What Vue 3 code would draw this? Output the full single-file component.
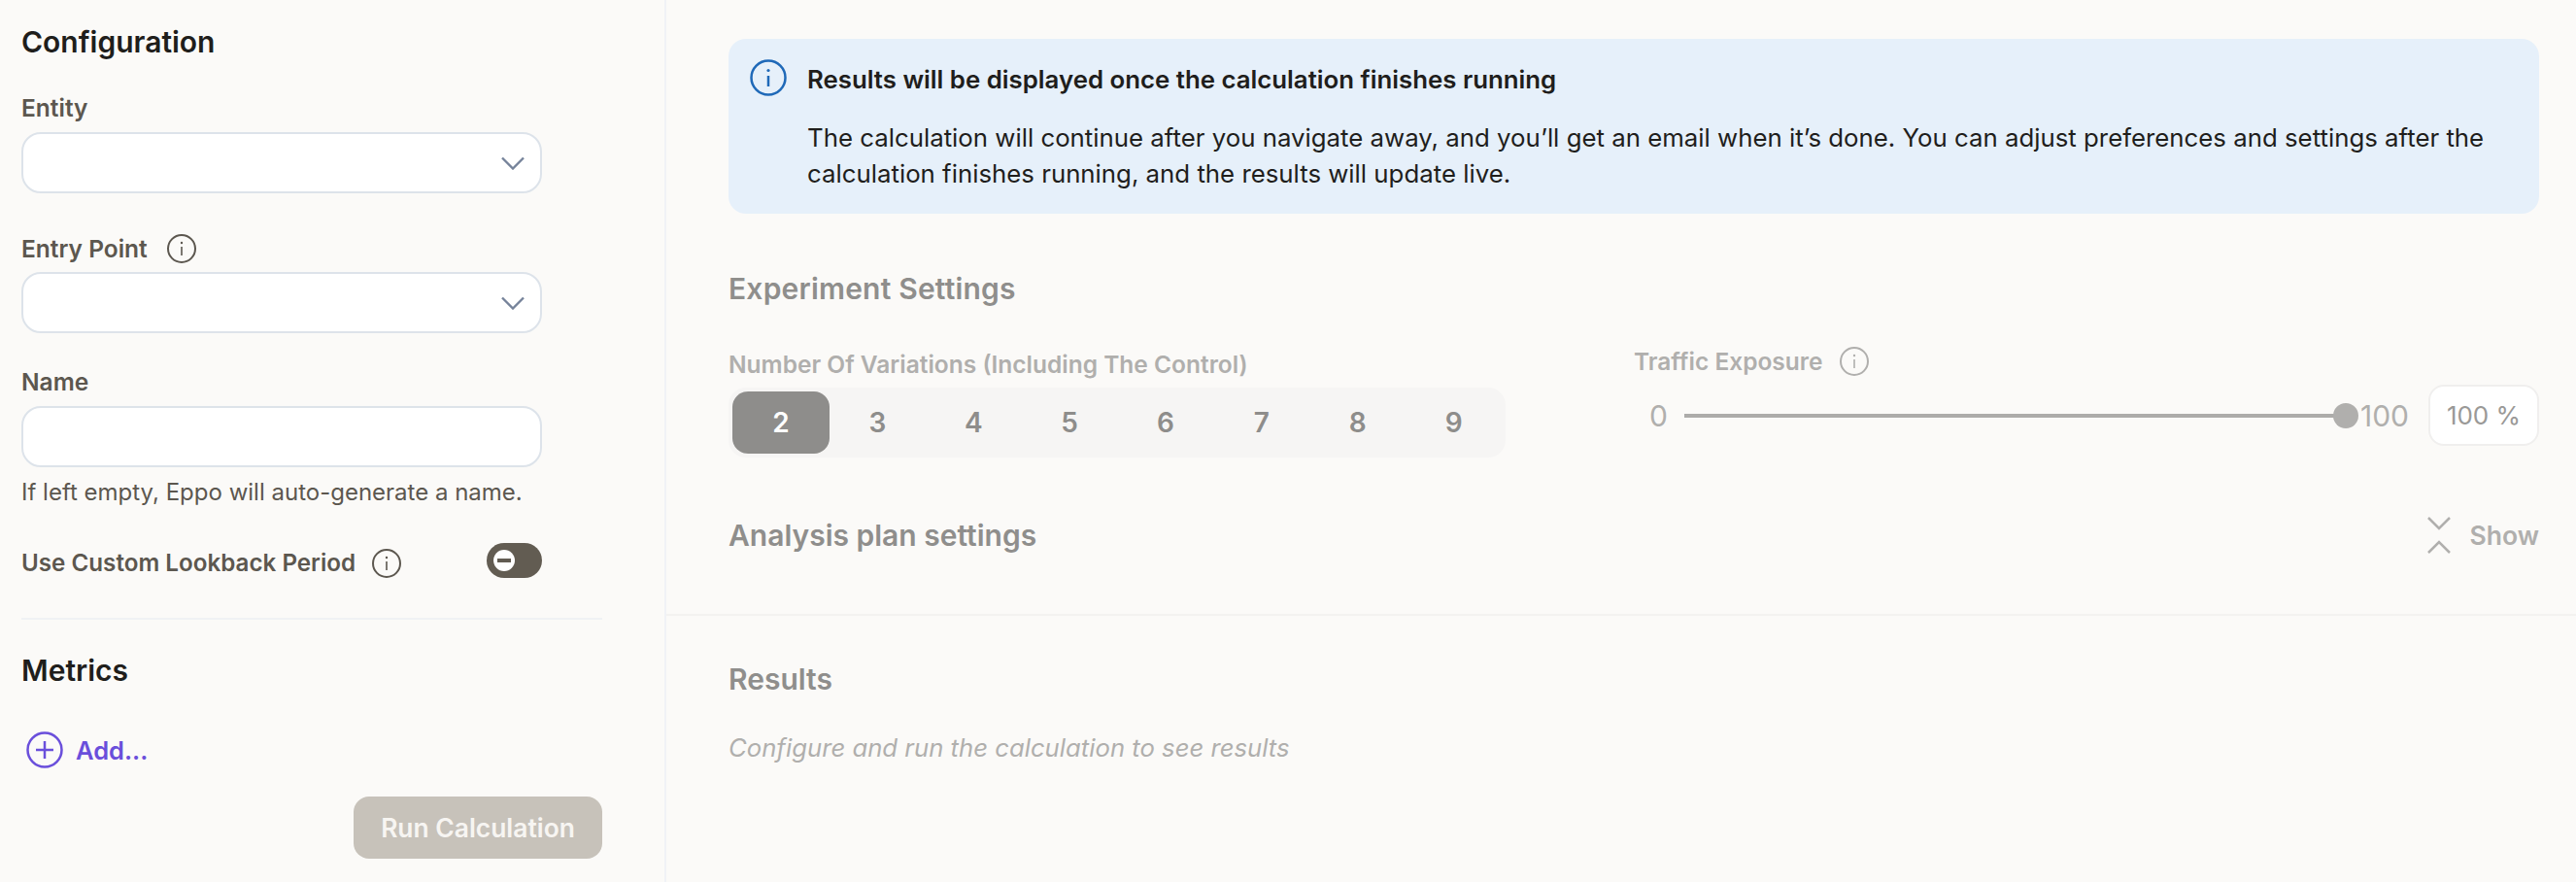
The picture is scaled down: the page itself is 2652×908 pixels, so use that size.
<template>
  <div class="page">
    <aside class="sidebar">
      <h2 class="heading">Configuration</h2>

      <div class="field first">
        <label class="label">Entity</label>
        <div class="select">
          <svg class="chevron" width="24" height="14" viewBox="0 0 24 14"><path d="M1 1.5 12 12.5 23 1.5" /></svg>
        </div>
      </div>

      <div class="field second">
        <label class="label">Entry Point <InfoMark /></label>
        <div class="select">
          <svg class="chevron" width="24" height="14" viewBox="0 0 24 14"><path d="M1 1.5 12 12.5 23 1.5" /></svg>
        </div>
      </div>

      <div class="field third">
        <label class="label">Name</label>
        <div class="select"></div>
        <p class="hint">If left empty, Eppo will auto-generate a name.</p>
      </div>

      <div class="toggle-row">
        <span class="label">Use Custom Lookback Period <InfoMark /></span>
        <span class="toggle"><span class="knob"></span></span>
      </div>

      <div class="rule"></div>

      <h2 class="heading metrics">Metrics</h2>

      <div class="add">
        <svg width="38" height="38" viewBox="0 0 38 38" fill="none" stroke="currentColor" stroke-width="2.5">
          <circle cx="19" cy="19" r="17.5" />
          <path d="M19 10v18M10 19h18" />
        </svg>
        <span>Add...</span>
      </div>

      <button class="run">Run Calculation</button>
    </aside>

    <main class="main">
      <section class="top">
        <div class="banner">
          <svg class="banner-icon" width="38" height="38" viewBox="0 0 38 38" fill="none" stroke="#1f69b8" stroke-width="2.5">
            <circle cx="19" cy="19" r="17.5" />
            <path d="M19 17v11" />
            <circle cx="19" cy="11.5" r="1.6" fill="#1f69b8" stroke="none" />
          </svg>
          <div>
            <div class="banner-title">Results will be displayed once the calculation finishes running</div>
            <p class="banner-body">The calculation will continue after you navigate away, and you’ll get an email when it’s done. You can adjust preferences and settings after the calculation finishes running, and the results will update live.</p>
          </div>
        </div>

        <h2 class="heading muted settings">Experiment Settings</h2>

        <div class="settings-row">
          <div class="variations">
            <div class="label faded">Number Of Variations (Including The Control)</div>
            <div class="segments">
              <span v-for="n in variations" :key="n" class="segment" :class="{ active: n === 2 }">{{ n }}</span>
            </div>
          </div>

          <div class="traffic">
            <div class="label faded">Traffic Exposure <InfoMark faded /></div>
            <div class="slider-row">
              <span class="bound zero">0</span>
              <div class="track"><span class="handle"></span></div>
              <span class="bound">100</span>
              <div class="percent">100 %</div>
            </div>
          </div>
        </div>

        <div class="analysis">
          <h2 class="heading muted">Analysis plan settings</h2>
          <div class="show">
            <svg width="24" height="38" viewBox="0 0 24 38" fill="none" stroke="#b0afad" stroke-width="2.5">
              <path d="M1 1 12 12 23 1M1 37 12 26 23 37" />
            </svg>
            <span>Show</span>
          </div>
        </div>
      </section>

      <section class="results">
        <h2 class="heading muted">Results</h2>
        <p class="empty">Configure and run the calculation to see results</p>
      </section>
    </main>
  </div>
</template>

<script setup>
import { h } from 'vue'

const variations = [2, 3, 4, 5, 6, 7, 8, 9]

// small circled "i" next to labels
const InfoMark = (props) => {
  const color = props.faded !== undefined && props.faded !== false ? '#b0afad' : '#5c574f'
  return h('svg', { class: 'info', width: 30, height: 30, viewBox: '0 0 30 30', fill: 'none', stroke: color, 'stroke-width': 2 }, [
    h('circle', { cx: 15, cy: 15, r: 14 }),
    h('path', { d: 'M15 13v9', 'stroke-width': 1.6 }),
    h('circle', { cx: 15, cy: 9, r: 1.2, fill: color, stroke: 'none' })
  ])
}
InfoMark.props = ['faded']
</script>

<style>
html, body {
  margin: 0;
  background: #fbfaf8;
}

.info {
  flex: none;
  margin-left: 17px;
}

.field .info {
  margin-left: 20px;
}
</style>

<style scoped>
.page {
  display: flex;
  width: 2652px;
  height: 908px;
  overflow: hidden;
  background: #fbfaf8;
  font-family: Inter, "Liberation Sans", sans-serif;
  color: #1f1e1c;
}

.sidebar {
  display: flex;
  flex-direction: column;
  box-sizing: border-box;
  width: 686px;
  padding: 25px 64px 0 22px;
  border-right: 2px solid #f0f2f6;
}

.heading {
  margin: 0;
  font-size: 30px;
  line-height: 36px;
  font-weight: 600;
}

.label {
  display: flex;
  align-items: center;
  box-sizing: border-box;
  height: 32px;
  padding-bottom: 1px;
  font-size: 24.5px;
  font-weight: 600;
  color: #5c574f;
}

.field.first { margin-top: 34px; }
.field.first .label { margin-bottom: 9px; }
.field.second { margin-top: 41px; }
.field.second .label { margin-bottom: 8px; }
.field.third { margin-top: 34px; }
.field.third .label { margin-bottom: 9px; }

.select {
  display: flex;
  align-items: center;
  justify-content: flex-end;
  box-sizing: border-box;
  width: 536px;
  height: 63px;
  padding-right: 16px;
  background: #fff;
  border: 2px solid #dde3ea;
  border-radius: 20px;
}

.chevron {
  fill: none;
  stroke: #76839a;
  stroke-width: 2.4;
}

.hint {
  margin: 10px 0 0;
  font-size: 24px;
  line-height: 32px;
  color: #5c574f;
}

.toggle-row {
  display: flex;
  justify-content: space-between;
  align-items: flex-start;
  width: 536px;
  margin-top: 36px;
}

.toggle-row .label {
  margin-top: 5px;
  font-size: 24.2px;
}

.toggle {
  display: flex;
  align-items: center;
  box-sizing: border-box;
  width: 57px;
  height: 36px;
  padding-left: 7px;
  background: #625c52;
  border-radius: 18px;
}

.knob {
  position: relative;
  width: 22px;
  height: 22px;
  background: #fff;
  border-radius: 50%;
}

.knob::after {
  content: "";
  position: absolute;
  left: 4px;
  right: 4px;
  top: 9px;
  height: 4px;
  background: #625c52;
}

.rule {
  height: 2px;
  margin-top: 40px;
  background: #f0f2f4;
}

.metrics {
  margin-top: 34px;
}

.add {
  display: flex;
  align-items: center;
  gap: 13px;
  margin-top: 45px;
  padding-left: 5px;
  color: #6a4fdb;
  font-size: 25.5px;
  font-weight: 600;
}

.run {
  align-self: flex-end;
  width: 256px;
  height: 64px;
  margin-top: 29px;
  padding: 0;
  border: 0;
  border-radius: 16px;
  background: #c7c2ba;
  color: #f7f5f2;
  font-family: inherit;
  font-size: 26.4px;
  font-weight: 600;
}

.main {
  flex: 1;
  display: flex;
  flex-direction: column;
}

.top {
  box-sizing: border-box;
  height: 634px;
  padding: 40px 38px 0 64px;
  border-bottom: 2px solid #f3f2f0;
}

.banner {
  display: flex;
  gap: 21px;
  box-sizing: border-box;
  height: 180px;
  padding: 21px 22px 0;
  background: #e6f0fa;
  border-radius: 18px;
}

.banner-icon {
  flex: none;
}

.banner-title {
  margin-top: 2px;
  font-size: 25.8px;
  line-height: 37px;
  font-weight: 600;
}

.banner-body {
  margin: 23px 0 0;
  font-size: 25.8px;
  line-height: 37px;
}

.muted {
  color: #8f8e8c;
}

.settings {
  margin-top: 59px;
  letter-spacing: 0.2px;
}

.settings-row {
  display: flex;
  justify-content: space-between;
  margin-top: 44px;
}

.faded {
  color: #b0afad;
}

.segments {
  display: flex;
  width: 800px;
  box-sizing: border-box;
  margin-top: 8px;
  padding: 4px;
  background: #f6f5f4;
  border-radius: 18px;
}

.segment {
  flex: 1;
  height: 64px;
  line-height: 64px;
  text-align: center;
  border-radius: 16px;
  font-size: 28px;
  font-weight: 600;
  color: #8e8d8b;
}

.segment.active {
  flex: 0 0 100px;
  background: #8e8d8b;
  color: #fff;
}

.traffic {
  width: 932px;
  margin-top: -3px;
}

.slider-row {
  display: flex;
  align-items: center;
  margin-top: 8px;
}

.bound {
  font-size: 30px;
  color: #b0afad;
}

.zero {
  margin-left: 16px;
  margin-right: 17px;
}

.track {
  position: relative;
  width: 682px;
  height: 4px;
  margin-right: 14px;
  background: #adacaa;
}

.handle {
  position: absolute;
  right: -12px;
  top: -11px;
  width: 26px;
  height: 26px;
  background: #b0afad;
  border-radius: 50%;
}

.percent {
  box-sizing: border-box;
  width: 114px;
  height: 63px;
  margin-left: auto;
  line-height: 59px;
  text-align: center;
  background: #fff;
  border: 2px solid #f0efee;
  border-radius: 16px;
  font-size: 26px;
  color: #9a9997;
}

.analysis {
  display: flex;
  justify-content: space-between;
  align-items: center;
  margin-top: 61px;
}

.show {
  display: flex;
  align-items: center;
  gap: 20px;
  font-size: 26.5px;
  font-weight: 600;
  color: #b0afad;
}

.results {
  padding: 47px 64px 0;
}

.empty {
  margin: 37px 0 0;
  font-size: 25.7px;
  line-height: 32px;
  font-style: italic;
  color: #b0afad;
}
</style>
